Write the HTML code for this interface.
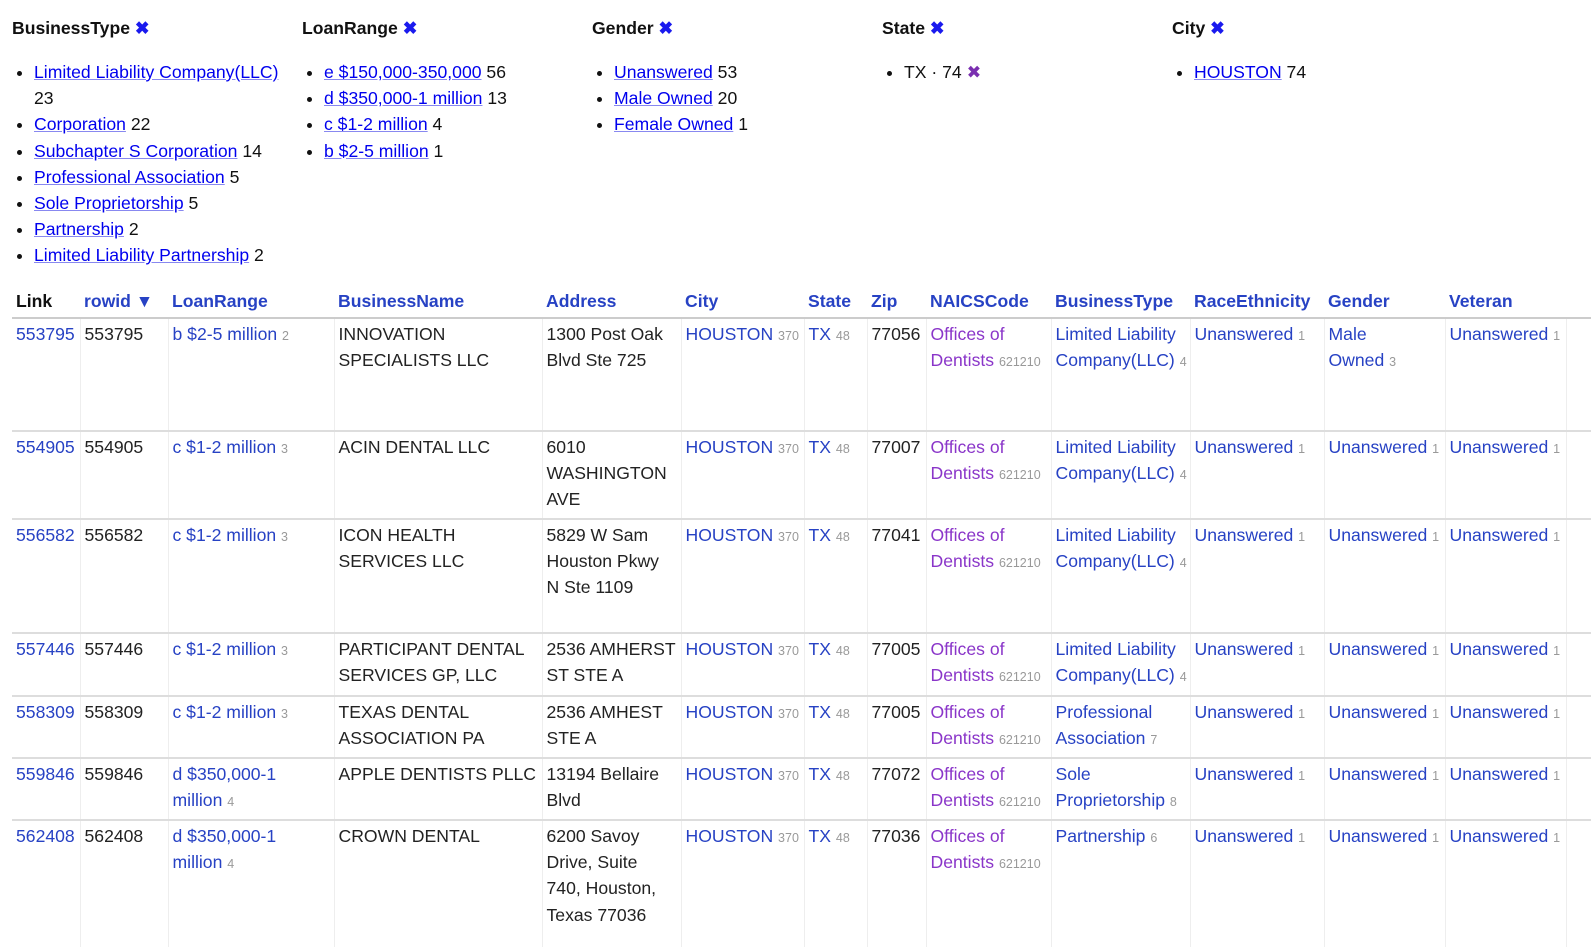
<!DOCTYPE html>
<html style="width:1591px;height:947px;overflow:hidden"><head><meta charset="utf-8"><style>
body{margin:0;background:#fff;font-family:"Liberation Sans",Arial,sans-serif;font-size:17.6px;color:#111;width:1591px;height:947px;overflow:hidden;position:relative}
.facet{position:absolute;top:16px;width:285px}
.facet h3{margin:0;font-size:17.6px;font-weight:bold;line-height:24px}
.facet h3 span{color:#1a1aee}
.facet ul{margin:19px 0 0 0;padding-left:22px;line-height:26.2px}
.facet a{color:#0000ee;text-decoration:underline;text-decoration-color:#8888f0}
table{position:absolute;left:12px;top:286px;border-collapse:collapse;table-layout:fixed;width:1579px}
th{text-align:left;font-weight:bold;color:#2742c4;height:31px;padding:0 4px;vertical-align:middle;border-bottom:2px solid #ccc;white-space:nowrap;overflow:hidden}
th.k{color:#111}
td{vertical-align:top;padding:2px 4px 0 4px;line-height:26.2px;border-left:1px solid #eee;border-bottom:2px solid #ddd;color:#222;white-space:nowrap;overflow:hidden}
td:first-child{border-left:none}
td a{color:#2742c4;text-decoration:none}
td a.p{color:#8a35c9}
td small{color:#999;font-size:12.5px}
</style></head><body>
<div class="facet" style="left:12px"><h3>BusinessType <span>✖</span></h3><ul>
<li><a>Limited Liability Company(LLC)</a><br>23</li><li><a>Corporation</a> 22</li><li><a>Subchapter S Corporation</a> 14</li><li><a>Professional Association</a> 5</li><li><a>Sole Proprietorship</a> 5</li><li><a>Partnership</a> 2</li><li><a>Limited Liability Partnership</a> 2</li></ul></div>
<div class="facet" style="left:302px"><h3>LoanRange <span>✖</span></h3><ul>
<li><a>e $150,000-350,000</a> 56</li><li><a>d $350,000-1 million</a> 13</li><li><a>c $1-2 million</a> 4</li><li><a>b $2-5 million</a> 1</li></ul></div>
<div class="facet" style="left:592px"><h3>Gender <span>✖</span></h3><ul>
<li><a>Unanswered</a> 53</li><li><a>Male Owned</a> 20</li><li><a>Female Owned</a> 1</li></ul></div>
<div class="facet" style="left:882px"><h3>State <span>✖</span></h3><ul>
<li>TX · 74 <span style="color:#7a2fb0">✖</span></li></ul></div>
<div class="facet" style="left:1172px"><h3>City <span>✖</span></h3><ul>
<li><a>HOUSTON</a> 74</li></ul></div>
<table>
<colgroup><col style="width:68px"><col style="width:88px"><col style="width:166px"><col style="width:208px"><col style="width:139px"><col style="width:123px"><col style="width:63px"><col style="width:59px"><col style="width:125px"><col style="width:139px"><col style="width:134px"><col style="width:121px"><col style="width:121px"><col style="width:25px"></colgroup>
<tr><th class="k">Link</th><th>rowid ▼</th><th>LoanRange</th><th>BusinessName</th><th>Address</th><th>City</th><th>State</th><th>Zip</th><th>NAICSCode</th><th>BusinessType</th><th>RaceEthnicity</th><th>Gender</th><th>Veteran</th><th></th></tr>
<tr style="height:113px"><td><a>553795</a></td><td>553795</td><td><a>b $2-5 million</a> <small>2</small></td><td>INNOVATION<br>SPECIALISTS LLC</td><td>1300 Post Oak<br>Blvd Ste 725</td><td><a>HOUSTON</a> <small>370</small></td><td><a>TX</a> <small>48</small></td><td>77056</td><td><a class="p">Offices of<br>Dentists</a> <small>621210</small></td><td><a>Limited Liability<br>Company(LLC)</a> <small>4</small></td><td><a>Unanswered</a> <small>1</small></td><td><a>Male<br>Owned</a> <small>3</small></td><td><a>Unanswered</a> <small>1</small></td><td></td></tr>
<tr style="height:88px"><td><a>554905</a></td><td>554905</td><td><a>c $1-2 million</a> <small>3</small></td><td>ACIN DENTAL LLC</td><td>6010<br>WASHINGTON<br>AVE</td><td><a>HOUSTON</a> <small>370</small></td><td><a>TX</a> <small>48</small></td><td>77007</td><td><a class="p">Offices of<br>Dentists</a> <small>621210</small></td><td><a>Limited Liability<br>Company(LLC)</a> <small>4</small></td><td><a>Unanswered</a> <small>1</small></td><td><a>Unanswered</a> <small>1</small></td><td><a>Unanswered</a> <small>1</small></td><td></td></tr>
<tr style="height:114px"><td><a>556582</a></td><td>556582</td><td><a>c $1-2 million</a> <small>3</small></td><td>ICON HEALTH<br>SERVICES LLC</td><td>5829 W Sam<br>Houston Pkwy<br>N Ste 1109</td><td><a>HOUSTON</a> <small>370</small></td><td><a>TX</a> <small>48</small></td><td>77041</td><td><a class="p">Offices of<br>Dentists</a> <small>621210</small></td><td><a>Limited Liability<br>Company(LLC)</a> <small>4</small></td><td><a>Unanswered</a> <small>1</small></td><td><a>Unanswered</a> <small>1</small></td><td><a>Unanswered</a> <small>1</small></td><td></td></tr>
<tr style="height:63px"><td><a>557446</a></td><td>557446</td><td><a>c $1-2 million</a> <small>3</small></td><td>PARTICIPANT DENTAL<br>SERVICES GP, LLC</td><td>2536 AMHERST<br>ST STE A</td><td><a>HOUSTON</a> <small>370</small></td><td><a>TX</a> <small>48</small></td><td>77005</td><td><a class="p">Offices of<br>Dentists</a> <small>621210</small></td><td><a>Limited Liability<br>Company(LLC)</a> <small>4</small></td><td><a>Unanswered</a> <small>1</small></td><td><a>Unanswered</a> <small>1</small></td><td><a>Unanswered</a> <small>1</small></td><td></td></tr>
<tr style="height:62px"><td><a>558309</a></td><td>558309</td><td><a>c $1-2 million</a> <small>3</small></td><td>TEXAS DENTAL<br>ASSOCIATION PA</td><td>2536 AMHEST<br>STE A</td><td><a>HOUSTON</a> <small>370</small></td><td><a>TX</a> <small>48</small></td><td>77005</td><td><a class="p">Offices of<br>Dentists</a> <small>621210</small></td><td><a>Professional<br>Association</a> <small>7</small></td><td><a>Unanswered</a> <small>1</small></td><td><a>Unanswered</a> <small>1</small></td><td><a>Unanswered</a> <small>1</small></td><td></td></tr>
<tr style="height:62px"><td><a>559846</a></td><td>559846</td><td><a>d $350,000-1<br>million</a> <small>4</small></td><td>APPLE DENTISTS PLLC</td><td>13194 Bellaire<br>Blvd</td><td><a>HOUSTON</a> <small>370</small></td><td><a>TX</a> <small>48</small></td><td>77072</td><td><a class="p">Offices of<br>Dentists</a> <small>621210</small></td><td><a>Sole<br>Proprietorship</a> <small>8</small></td><td><a>Unanswered</a> <small>1</small></td><td><a>Unanswered</a> <small>1</small></td><td><a>Unanswered</a> <small>1</small></td><td></td></tr>
<tr style="height:130px"><td><a>562408</a></td><td>562408</td><td><a>d $350,000-1<br>million</a> <small>4</small></td><td>CROWN DENTAL</td><td>6200 Savoy<br>Drive, Suite<br>740, Houston,<br>Texas 77036</td><td><a>HOUSTON</a> <small>370</small></td><td><a>TX</a> <small>48</small></td><td>77036</td><td><a class="p">Offices of<br>Dentists</a> <small>621210</small></td><td><a>Partnership</a> <small>6</small></td><td><a>Unanswered</a> <small>1</small></td><td><a>Unanswered</a> <small>1</small></td><td><a>Unanswered</a> <small>1</small></td><td></td></tr>
</table>
</body></html>
